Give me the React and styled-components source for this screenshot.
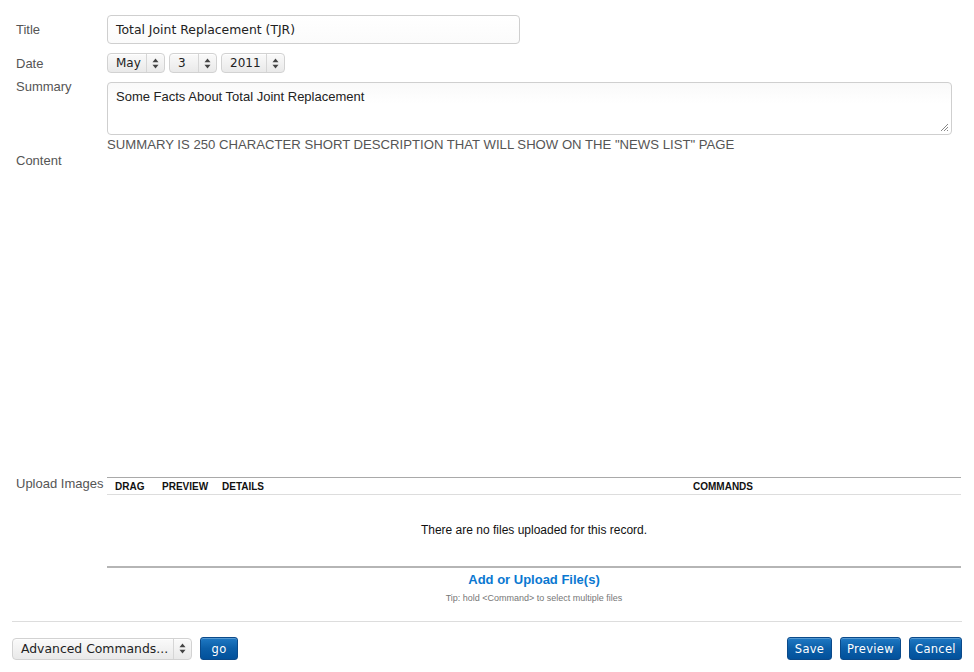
import styled, { createGlobalStyle } from "styled-components";

const GlobalStyle = createGlobalStyle`
  body {
    margin: 0;
    background: #fff;
    font-family: Arial, "Liberation Sans", Helvetica, sans-serif;
  }
`;

const Page = styled.div`
  width: 974px;
  height: 672px;
  overflow: hidden;
`;

const Row = styled.div`
  display: flex;
  align-items: ${({ top }) => (top ? "flex-start" : "center")};
  padding-left: 16px;
  margin-top: ${({ mt }) => mt || 0}px;
  min-height: ${({ h }) => h || 0}px;
`;

const Label = styled.label`
  width: 91px;
  flex: none;
  font-size: 13px;
  line-height: 16px;
  color: #555;
  margin-top: ${({ nudge }) => nudge || 0}px;
`;

const TextInput = styled.div`
  width: 413px;
  height: 29px;
  box-sizing: border-box;
  border: 1px solid #cfcfcf;
  border-radius: 4px;
  padding: 0 8px;
  display: flex;
  align-items: center;
  font-family: "DejaVu Sans", sans-serif;
  font-size: 12.4px;
  color: #222;
  background: linear-gradient(#fff, #fbfbfb);
`;

const SelectBox = styled.div`
  width: ${({ w }) => w}px;
  height: ${({ h }) => h || 20}px;
  box-sizing: border-box;
  display: flex;
  align-items: stretch;
  border: 1px solid #d2d2d2;
  border-radius: 4px;
  background: linear-gradient(#fafafa, #e9e9e9);
  box-shadow: inset 0 1px 1px rgba(255, 255, 255, 0.8);
  font-family: "DejaVu Sans", sans-serif;
  font-size: ${({ fs }) => fs || 12}px;
  color: #222;
`;

const SelectText = styled.span`
  flex: 1;
  padding-left: 8px;
  display: flex;
  align-items: center;
  white-space: nowrap;
`;

const Stepper = styled.span`
  width: 17px;
  flex: none;
  border-left: 1px solid #d6d6d6;
  display: flex;
  align-items: center;
  justify-content: center;
`;

const DateGroup = styled.div`
  display: flex;
  gap: 4px;
`;

const TextArea = styled.div`
  width: 845px;
  height: 53px;
  box-sizing: border-box;
  border: 1px solid #cfcfcf;
  border-radius: 4px;
  padding: 6px 8px;
  font-size: 13px;
  line-height: 15px;
  color: #222;
  position: relative;
  background: linear-gradient(#f9f9f9, #fff 40%);
`;

const Grip = styled.svg`
  position: absolute;
  right: 2px;
  bottom: 2px;
`;

const Help = styled.div`
  padding-left: 107px;
  font-size: 13.15px;
  line-height: 15px;
  color: #555;
  margin-top: 2px;
`;

const Editor = styled.div`
  height: 322px;
`;

const FileTable = styled.div`
  width: 854px;
  border-top: 1px solid #a9a9a9;
  margin-top: 2px;
`;

const HeadRow = styled.div`
  display: grid;
  grid-template-columns: 47px 60px 471px 1fr;
  height: 16px;
  align-items: center;
  border-bottom: 1px solid #ddd;
`;

const HeadCell = styled.span`
  padding-left: 8px;
  font-size: 10px;
  font-weight: bold;
  color: #111;
`;

const Empty = styled.div`
  height: 70px;
  padding-bottom: 1px;
  display: flex;
  align-items: center;
  justify-content: center;
  font-size: 12px;
  color: #111;
  border-bottom: 2px solid #b5b5b5;
`;

const AddLink = styled.a`
  display: block;
  text-align: center;
  font-size: 13px;
  font-weight: bold;
  color: #0a78d1;
  margin-top: 4px;
  line-height: 15px;
  text-decoration: none;
`;

const Tip = styled.div`
  text-align: center;
  font-size: 9px;
  color: #777;
  margin-top: 6px;
  line-height: 11px;
`;

const Footer = styled.div`
  margin: 17px 12px 0;
  border-top: 1px solid #ddd;
  padding-top: 15px;
  display: flex;
  align-items: center;
  justify-content: space-between;
`;

const Group = styled.div`
  display: flex;
  gap: 8px;
  align-items: center;
`;

const Button = styled.button`
  width: ${({ w }) => w}px;
  height: 23px;
  padding: 0;
  border: 1px solid #0b4a8a;
  border-radius: 3px;
  background: linear-gradient(#1f79c4, #0b5ea8 50%, #02519b);
  color: #fff;
  font-family: "DejaVu Sans", sans-serif;
  font-size: 11.5px;
  letter-spacing: 0.3px;
  box-shadow: inset 0 1px 0 rgba(255, 255, 255, 0.25);
  cursor: pointer;
`;

function Arrows() {
  return (
    <svg width="7" height="11" viewBox="0 0 7 11">
      <path d="M3.5 0.5 L6.5 4.2 H0.5 Z" fill="#444" />
      <path d="M3.5 10.5 L6.5 6.8 H0.5 Z" fill="#444" />
    </svg>
  );
}

function Select({ value, w, h, fs }) {
  return (
    <SelectBox w={w} h={h} fs={fs}>
      <SelectText>{value}</SelectText>
      <Stepper>
        <Arrows />
      </Stepper>
    </SelectBox>
  );
}

export default function App() {
  return (
    <Page>
      <GlobalStyle />
      <Row mt={15} h={29}>
        <Label>Title</Label>
        <TextInput>Total Joint Replacement (TJR)</TextInput>
      </Row>
      <Row mt={9} h={20}>
        <Label nudge={1}>Date</Label>
        <DateGroup>
          <Select value="May" w={58} />
          <Select value="3" w={48} />
          <Select value="2011" w={64} />
        </DateGroup>
      </Row>
      <Row mt={9} top>
        <Label nudge={-3}>Summary</Label>
        <TextArea>
          Some Facts About Total Joint Replacement
          <Grip width="9" height="9" viewBox="0 0 9 9">
            <path d="M1 8 L8 1 M4 8 L8 4 M7 8 L8 7" stroke="#888" strokeWidth="1" />
          </Grip>
        </TextArea>
      </Row>
      <Help>SUMMARY IS 250 CHARACTER SHORT DESCRIPTION THAT WILL SHOW ON THE "NEWS LIST" PAGE</Help>
      <Row mt={1} top>
        <Label>Content</Label>
        <Editor />
      </Row>
      <Row top>
        <Label nudge={1}>Upload Images</Label>
        <FileTable>
          <HeadRow>
            <HeadCell>DRAG</HeadCell>
            <HeadCell>PREVIEW</HeadCell>
            <HeadCell>DETAILS</HeadCell>
            <HeadCell>COMMANDS</HeadCell>
          </HeadRow>
          <Empty>There are no files uploaded for this record.</Empty>
          <AddLink href="#">Add or Upload File(s)</AddLink>
          <Tip>Tip: hold &lt;Command&gt; to select multiple files</Tip>
        </FileTable>
      </Row>
      <Footer>
        <Group>
          <Select value="Advanced Commands..." w={180} h={22} fs={12.4} />
          <Button w={38}>go</Button>
        </Group>
        <Group>
          <Button w={45}>Save</Button>
          <Button w={61}>Preview</Button>
          <Button w={53}>Cancel</Button>
        </Group>
      </Footer>
    </Page>
  );
}
